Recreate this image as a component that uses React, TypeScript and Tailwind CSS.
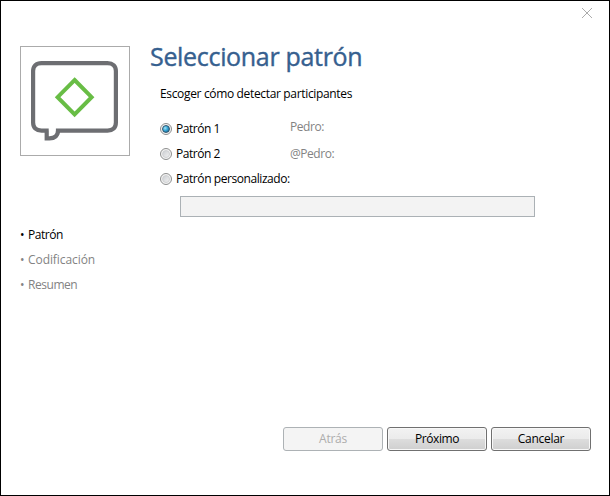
import React from "react";

function PatternIcon() {
  return (
    <svg viewBox="0 0 108 108" className="block h-[108px] w-[108px]" fill="none">
      <path
        d="M25.7 83.6V91.4H28.5C33.8 91.4 37 88.6 37 83.6H86.5C91.9 83.6 94.9 80.6 94.9 75.6V24.1C94.9 19.1 91.9 16.1 86.5 16.1H20.5C15.1 16.1 12.1 19.1 12.1 24.1V75.6C12.1 80.6 15.1 83.6 20.5 83.6H27.7"
        stroke="#6d6e72"
        strokeWidth="4.2"
      />
      <path d="M53.6 33L70.6 50.2L53.6 67.4L36.6 50.2Z" stroke="#68bd45" strokeWidth="4" />
    </svg>
  );
}

function Radio({ checked = false }: { checked?: boolean }) {
  return (
    <span className="flex h-3 w-3 shrink-0 items-center justify-center rounded-full border border-[#8e8f8f] bg-[#f4f4f4]">
      {checked ? (
        <span className="h-2 w-2 rounded-full border border-[#2f546d] bg-[radial-gradient(circle_at_35%_35%,#a6e5fa_0%,#35a5d5_45%,#155278_100%)]" />
      ) : (
        <span className="h-2 w-2 rounded-full border border-[#cfd1d3] bg-linear-to-br from-[#cdd0d4] to-[#f0f0f0]" />
      )}
    </span>
  );
}

function DialogButton({ label, tracking, disabled = false }: { label: string; tracking: string; disabled?: boolean }) {
  return (
    <button
      disabled={disabled}
      className={`h-6 w-[100px] rounded-[3px] border leading-[22px] ${tracking} ${
        disabled
          ? "border-[#adb2b5] bg-[#f4f4f4] text-[#adadad]"
          : "border-[#707070] bg-[linear-gradient(#f2f2f2_0%,#ebebeb_50%,#dddddd_50%,#cfcfcf_100%)] text-black shadow-[inset_0_0_0_1px_#f8f8f8]"
      }`}
    >
      {label}
    </button>
  );
}

export default function App() {
  return (
    <main className="flex h-[496px] w-[610px] flex-col border border-black bg-white font-['Open_Sans','Noto_Sans',sans-serif] text-[12px] leading-[25px] text-black">
      <header className="flex h-[45px] justify-end pt-[7px] pr-[17px]">
        <svg viewBox="0 0 10 10" className="h-[10px] w-[10px]">
          <path d="M0 0L10 10M10 0L0 10" stroke="#ababab" strokeWidth="1" />
        </svg>
      </header>
      <div className="flex h-[381px]">
        <aside className="w-[149px] pl-[19px]">
          <div className="h-[110px] w-[110px] border border-[#ababab]">
            <PatternIcon />
          </div>
          <ul className="pt-[66px] text-[#838383]">
            <li className="flex gap-1 text-black"><span className="w-1">•</span><span className="tracking-[-0.45px]">Patrón</span></li>
            <li className="flex gap-1"><span className="w-1">•</span><span className="tracking-[-0.07px]">Codificación</span></li>
            <li className="flex gap-1"><span className="w-1">•</span><span className="tracking-[-0.45px]">Resumen</span></li>
          </ul>
        </aside>
        <section className="flex flex-col items-start">
          <h1 className="h-[35px] text-[25px] leading-[20px] tracking-[-0.32px] text-[#36608f] [-webkit-text-stroke:0.4px_#36608f]">Seleccionar patrón</h1>
          <p className="h-[35px] pl-[10px] tracking-[-0.34px]">Escoger cómo detectar participantes</p>
          <div className="flex flex-col pl-[10px] tracking-[-0.45px]">
            <label className="flex h-[25px] items-center gap-1"><Radio checked /><span className="w-[110px]">Patrón 1</span><span className="relative -top-0.5 text-[#838383]">Pedro:</span></label>
            <label className="flex h-[25px] items-center gap-1"><Radio /><span className="w-[110px]">Patrón 2</span><span className="text-[#838383]">@Pedro:</span></label>
            <label className="flex h-[25px] items-center gap-1"><Radio /><span className="tracking-[-0.43px]">Patrón personalizado:</span></label>
          </div>
          <input disabled className="mt-[5px] ml-[30px] h-[21px] w-[355px] border border-[#abb1b5] bg-[#f3f3f3]" />
        </section>
      </div>
      <footer className="flex justify-end gap-1 pr-[18px]">
        <DialogButton label="Atrás" tracking="tracking-[-0.25px]" disabled />
        <DialogButton label="Próximo" tracking="tracking-[-0.4px]" />
        <DialogButton label="Cancelar" tracking="tracking-[-0.3px]" />
      </footer>
    </main>
  );
}
